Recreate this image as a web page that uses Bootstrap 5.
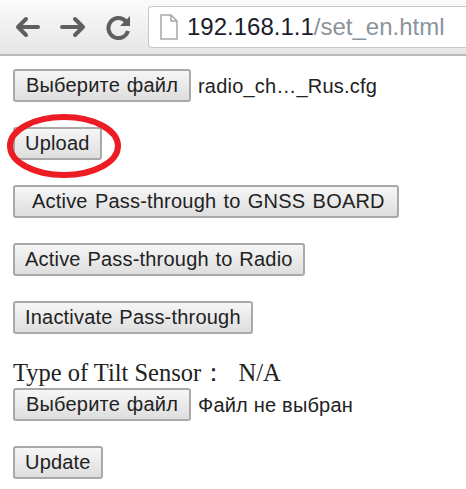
<!DOCTYPE html>
<html lang="en">
<head>
    <meta charset="UTF-8">
    <title>192.168.1.1/set_en.html</title>
    <link href="https://cdn.jsdelivr.net/npm/bootstrap@5.3.0/dist/css/bootstrap.min.css" rel="stylesheet">
    <style>
        html, body { height: 489px; overflow: hidden; }
        body { background: #fff; font-family: "Liberation Sans", Arial, sans-serif; color: #222; }
        .chrome-bar { height: 56px; padding: 6px 0 0 14px; background: linear-gradient(#fbfbfb, #e6e6e6); border-bottom: 2px solid #b8b8b8; }
        .nav-icon { width: 26px; height: 26px; flex: none; margin-top: 8px; }
        .nav-gap-a { margin-right: 20px; }
        .nav-gap-b { margin-right: 20px; }
        .addr-box { height: 42px; width: 330px; margin-left: 16px; padding-left: 11px; background: #fff; border: 1px solid #c6c6c6; border-right: 0; border-radius: 4px 0 0 4px; font-size: 24px; color: #1c1c2a; }
        .addr-path { color: #8b939b; }
        .file-ic { margin-right: 9px; }
        .page-body { padding: 13px 0 0 13px; gap: 25px; }
        .old-btn { height: 33px; padding: 0 10px 2px; font-size: 20px; letter-spacing: .2px; word-spacing: 1px; line-height: 1; color: #222; white-space: nowrap; background: linear-gradient(#f6f6f6, #dedede); border: 2px solid #a9a9a9; border-radius: 3px; }
        .old-btn.wide { padding: 0 12px 2px 17px; word-spacing: 1.5px; }
        .old-btn.pick-btn { padding: 0 11px 2px; }
        .file-name { font-size: 20px; letter-spacing: .2px; margin-left: 7px; color: #222; }
        .upload-wrap { width: fit-content; }
        .red-ring { position: absolute; left: -6px; top: -13px; width: 114px; height: 64px; }
        .tilt-block { margin-top: -1px; }
        .tilt-label { font-family: "Liberation Serif", "Times New Roman", serif; font-size: 24.5px; line-height: 30px; color: #222; white-space: pre; }
    </style>
</head>
<body>
<!-- browser toolbar -->
<div class="chrome-bar d-flex align-items-start">
    <svg class="nav-icon nav-gap-a" viewBox="0 0 26 26" fill="none" stroke="#5f5f5f" stroke-width="4" stroke-linecap="round" stroke-linejoin="round"><path d="M24 13H4M12 5l-8 8 8 8"/></svg>
    <svg class="nav-icon nav-gap-b" viewBox="0 0 26 26" fill="none" stroke="#5f5f5f" stroke-width="4" stroke-linecap="round" stroke-linejoin="round"><path d="M2 13h21M15 5l8 8-8 8"/></svg>
    <svg class="nav-icon" viewBox="0 0 26 26" fill="none"><path d="M20 7.5A10 10 0 1 0 22 17" stroke="#5f5f5f" stroke-width="4"/><path d="M24 2v10H14z" fill="#5f5f5f"/></svg>
    <div class="addr-box d-flex align-items-center">
        <svg class="file-ic" width="18" height="26" viewBox="0 0 18 26" fill="#fff" stroke="#a8a8a8" stroke-width="1.5"><path d="M1 1h10l6 6v18H1zM11 1v6h6"/></svg>
        <span>192.168.1.1<span class="addr-path">/set_en.html</span></span>
    </div>
</div>

<!-- page content -->
<div class="page-body d-flex flex-column align-items-start">
    <div class="d-flex align-items-center">
        <button type="button" class="old-btn pick-btn">Выберите файл</button>
        <span class="file-name">radio_ch…_Rus.cfg</span>
    </div>
    <div class="upload-wrap position-relative">
        <button type="button" class="old-btn">Upload</button>
        <svg class="red-ring" viewBox="0 0 114 64" fill="none"><ellipse cx="57" cy="32" rx="54" ry="29" stroke="#ed1c24" stroke-width="6"/></svg>
    </div>
    <button type="button" class="old-btn wide">Active Pass-through to GNSS BOARD</button>
    <button type="button" class="old-btn">Active Pass-through to Radio</button>
    <button type="button" class="old-btn">Inactivate Pass-through</button>
    <div class="tilt-block">
        <div class="tilt-label">Type of Tilt Sensor：  N/A</div>
        <div class="d-flex align-items-center">
            <button type="button" class="old-btn pick-btn">Выберите файл</button>
            <span class="file-name">Файл не выбран</span>
        </div>
    </div>
    <button type="button" class="old-btn">Update</button>
</div>
<script src="https://cdn.jsdelivr.net/npm/bootstrap@5.3.0/dist/js/bootstrap.bundle.min.js"></script>
</body>
</html>
